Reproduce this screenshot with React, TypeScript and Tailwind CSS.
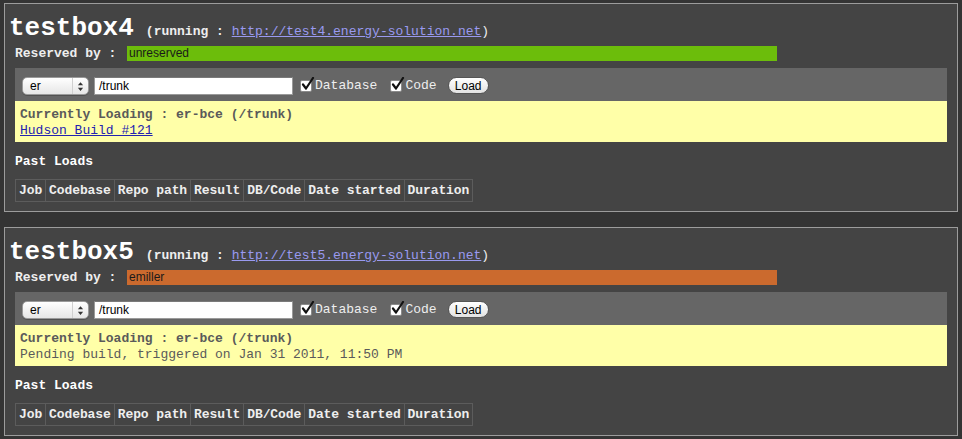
import React from "react";

const mono = { fontFamily: '"Liberation Mono", "Courier New", monospace' };
const sans = { fontFamily: '"Liberation Sans", Arial, sans-serif' };

function CheckBox() {
  return (
    <span className="relative inline-block w-[12px] h-[12px] bg-white border border-[#8a8a8a] rounded-[2px] shrink-0">
      <svg viewBox="0 0 14 14" className="absolute left-[0px] top-[-4px] w-[14px] h-[14px]">
        <path d="M2 7.5 L5 11.5 L12 1" fill="none" stroke="#111" strokeWidth="2.2" strokeLinecap="round" strokeLinejoin="round" />
      </svg>
    </span>
  );
}

function Select() {
  return (
    <div className="relative w-[67px] h-[18px] rounded-[5px] border border-[#9a9a9a] bg-gradient-to-b from-white to-[#e6e6e6] flex items-center shadow-[0_1px_0_rgba(0,0,0,0.2)]">
      <span className="pl-[7px] text-[12px] text-black leading-none" style={sans}>er</span>
      <div className="absolute right-[15px] top-0 bottom-0 w-px bg-[#d0d0d0]" />
      <svg viewBox="0 0 8 12" className="absolute right-[4px] top-[3px] w-[7px] h-[11px]">
        <path d="M4 1 L7 4.5 L1 4.5 Z M4 11 L7 7.5 L1 7.5 Z" fill="#333" />
      </svg>
    </div>
  );
}

function Box({
  name,
  url,
  reserved,
  barColor,
  second,
}: {
  name: string;
  url: string;
  reserved: string;
  barColor: string;
  second: React.ReactNode;
}) {
  const headers = ["Job", "Codebase", "Repo path", "Result", "DB/Code", "Date started", "Duration"];
  return (
    <div className="border border-[#9c9c9c] bg-[#444444] pl-[10px] pr-[10px] pt-[7px] pb-[9px]" style={mono}>
      <div className="flex items-baseline h-[30px] -ml-[6px]">
        <span className="text-[26px] leading-[34px] font-bold text-white">{name}</span>
        <span className="ml-[12px] text-[13px] leading-[16px] text-[#eeeeee]">
          <span className="font-bold">(running : </span>
          <a className="underline text-[#9a9af0]" href="#">{url}</a>
          <span>)</span>
        </span>
      </div>
      <div className="flex items-center mt-[5px] h-[15px]">
        <span className="text-[13px] leading-[15px] font-bold text-[#eeeeee] w-[112px] shrink-0">Reserved by :</span>
        <div className={`w-[650px] h-[15px] ${barColor} flex items-center pl-[2px]`}>
          <span className="text-[12px] leading-[15px] text-[#1a1a1a]" style={sans}>{reserved}</span>
        </div>
      </div>
      <div className="mt-[7px] h-[33px] bg-[#666666] flex items-center pl-[7px] pt-[2px]">
        <Select />
        <div className="ml-[5px] w-[199px] h-[18px] bg-white border border-[#9a9a9a] border-t-[#7a7a7a] flex items-center pl-[4px]">
          <span className="text-[12px] text-black" style={sans}>/trunk</span>
        </div>
        <div className="ml-[7px] flex items-center">
          <CheckBox />
          <span className="ml-[3px] text-[13px] text-[#eeeeee]">Database</span>
        </div>
        <div className="ml-[13px] flex items-center">
          <CheckBox />
          <span className="ml-[3px] text-[13px] text-[#eeeeee]">Code</span>
        </div>
        <div className="ml-[11px] w-[41px] h-[17px] rounded-full border border-[#555] bg-gradient-to-b from-white to-[#e2e2e2] flex items-center justify-center">
          <span className="text-[12px] leading-none text-black" style={sans}>Load</span>
        </div>
      </div>
      <div className="h-[41px] bg-[#ffffa8] px-[5px] pt-[6px] text-[13px] leading-[16px] text-[#5a5a5a]">
        <div className="font-bold">Currently Loading : er-bce (/trunk)</div>
        {second}
      </div>
      <div className="mt-[12px] text-[13px] leading-[16px] font-bold text-white">Past Loads</div>
      <table className="mt-[9px] border-collapse">
        <thead>
          <tr>
            {headers.map((h) => (
              <th
                key={h}
                className="border border-[#5c5c5c] px-[3px] py-[2px] h-[22px] text-[13px] leading-[15px] font-bold text-[#eeeeee] text-left whitespace-pre tracking-[-0.1px]"
              >
                {h}
              </th>
            ))}
          </tr>
        </thead>
      </table>
    </div>
  );
}

export default function App() {
  return (
    <div className="w-[962px] h-[439px] bg-[#343434] px-[4px] pt-[3px] overflow-hidden">
      <Box
        name="testbox4"
        url="http://test4.energy-solution.net"
        reserved="unreserved"
        barColor="bg-[#6cbd0b]"
        second={<a className="underline text-[#2323b0]" href="#">Hudson Build #121</a>}
      />
      <div className="h-[15px]" />
      <Box
        name="testbox5"
        url="http://test5.energy-solution.net"
        reserved="emiller"
        barColor="bg-[#cb6a2e]"
        second={<div>Pending build, triggered on Jan 31 2011, 11:50 PM</div>}
      />
    </div>
  );
}
